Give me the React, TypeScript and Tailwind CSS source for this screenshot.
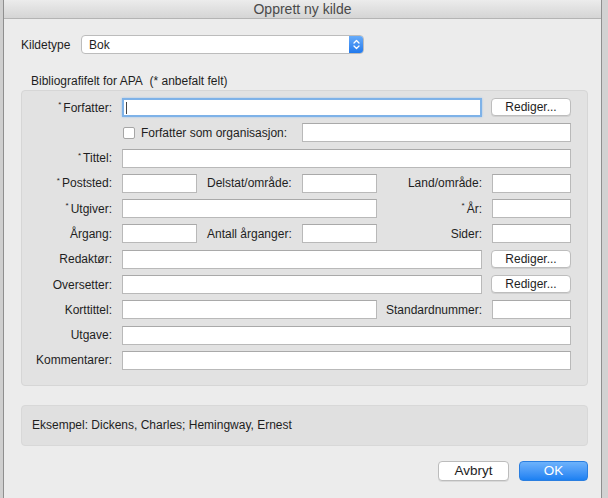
import React from "react";

const font = { fontFamily: '"Liberation Sans", Arial, sans-serif' };

function Input({ className = "" }: { className?: string }) {
  return (
    <div
      className={
        "h-[19px] bg-white border border-[#b9b9b9] border-t-[#a9a9a9] " + className
      }
    />
  );
}

function Label({ children, star, className = "" }: { children: React.ReactNode; star?: boolean; className?: string }) {
  return (
    <div className={"flex items-center justify-end h-[19px] text-[12px] text-[#1e1e1e] whitespace-nowrap " + className}>
      {star && <span className="text-[8px] mr-[2px] -mt-[5px]">*</span>}
      {children}
    </div>
  );
}

function EditBtn({ className = "" }: { className?: string }) {
  return (
    <div
      className={
        "h-[18px] -ml-[1px] bg-white rounded-[4px] border border-[#bdbdbd] shadow-[0_1px_0_rgba(0,0,0,0.08)] flex items-center justify-center text-[12px] text-[#1e1e1e] " +
        className
      }
    >
      Rediger...
    </div>
  );
}

export default function App() {
  return (
    <div className="w-[608px] h-[498px] bg-[#c9c9c9] flex overflow-hidden" style={font}>
      <div className="w-[3px] bg-[#cfcfcf]" />
      <div className="w-[599px] h-[498px] border-x border-[#8f8f8f] bg-[#ececec] flex flex-col">
        {/* title bar */}
        <div className="h-[19px] bg-gradient-to-b from-[#ececec] to-[#d5d5d5] border-b border-[#b4b4b4] flex items-center justify-center text-[14px] text-[#4a4a4a]">
          Opprett ny kilde
        </div>

        <div className="flex flex-col pl-[17px] pr-[13px]">
          {/* Kildetype */}
          <div className="flex items-center mt-[16px] h-[19px]">
            <div className="text-[12px] text-[#1e1e1e] w-[60px]">Kildetype</div>
            <div className="w-[283px] h-[19px] bg-white rounded-[4px] border border-[#bcbcbc] flex items-center overflow-hidden">
              <span className="flex-1 pl-[7px] text-[12px] text-[#1e1e1e]">Bok</span>
              <div className="w-[15px] h-[19px] -mr-[1px] bg-gradient-to-b from-[#6aaefa] to-[#1a76ec] rounded-r-[4px] flex items-center justify-center">
                <svg width="7" height="11" viewBox="0 0 7 11" fill="none" stroke="white" strokeWidth="1.3" strokeLinecap="round" strokeLinejoin="round">
                  <path d="M1 4 L3.5 1.5 L6 4" />
                  <path d="M1 7 L3.5 9.5 L6 7" />
                </svg>
              </div>
            </div>
          </div>

          {/* group label */}
          <div className="mt-[20px] ml-[10px] text-[12px] text-[#1e1e1e] h-[14px] leading-[14px]">
            Bibliografifelt for APA&nbsp; (* anbefalt felt)
          </div>

          {/* group box */}
          <div className="mt-[2px] bg-[#e2e2e2] rounded-[4px] border border-[#d6d6d6] pt-[7px] pb-[15px] pl-[7px] pr-[15px]">
            <div className="grid grid-cols-[83px_75px_85px_75px_95px_79px] gap-x-[10px] gap-y-[6.3px]">
              {/* Forfatter */}
              <Label star>Forfatter:</Label>
              <div className="col-span-4 h-[19px] bg-white border-2 border-[#7eb2e8] shadow-[0_0_2px_#9cc5f0] flex items-center pl-[2px]">
                <div className="w-[1px] h-[12px] bg-[#444]" />
              </div>
              <EditBtn />

              {/* checkbox row */}
              <div />
              <div className="col-span-2 flex items-center h-[19px]">
                <div className="w-[12px] h-[12px] ml-[1px] bg-white rounded-[2px] border border-[#a6a6a6]" />
                <span className="ml-[6px] text-[12px] text-[#1e1e1e] whitespace-nowrap">Forfatter som organisasjon:</span>
              </div>
              <Input className="col-span-3" />

              {/* Tittel */}
              <Label star>Tittel:</Label>
              <Input className="col-span-5" />

              {/* Poststed */}
              <Label star>Poststed:</Label>
              <Input />
              <Label className="!justify-start">Delstat/område:</Label>
              <Input />
              <Label>Land/område:</Label>
              <Input />

              {/* Utgiver */}
              <Label star>Utgiver:</Label>
              <Input className="col-span-3" />
              <Label star>År:</Label>
              <Input />

              {/* Årgang */}
              <Label>Årgang:</Label>
              <Input />
              <Label className="!justify-start">Antall årganger:</Label>
              <Input />
              <Label>Sider:</Label>
              <Input />

              {/* Redaktør */}
              <Label>Redaktør:</Label>
              <Input className="col-span-4" />
              <EditBtn />

              {/* Oversetter */}
              <Label>Oversetter:</Label>
              <Input className="col-span-4" />
              <EditBtn />

              {/* Korttittel */}
              <Label>Korttittel:</Label>
              <Input className="col-span-3" />
              <Label>Standardnummer:</Label>
              <Input />

              {/* Utgave */}
              <Label>Utgave:</Label>
              <Input className="col-span-5" />

              {/* Kommentarer */}
              <Label>Kommentarer:</Label>
              <Input className="col-span-5" />
            </div>
          </div>

          {/* example box */}
          <div className="mt-[19px] h-[41px] bg-[#e0e0e0] rounded-[4px] border border-[#d8d8d8] flex items-center pl-[10px] text-[12px] text-[#1e1e1e]">
            Eksempel: Dickens, Charles; Hemingway, Ernest
          </div>

          {/* buttons */}
          <div className="mt-[15px] flex justify-end gap-[10px]">
            <div className="w-[71px] h-[20px] bg-white rounded-[4px] border border-[#bcbcbc] shadow-[0_1px_0_rgba(0,0,0,0.08)] flex items-center justify-center text-[13.5px] text-[#1e1e1e]">
              Avbryt
            </div>
            <div className="w-[69px] h-[20px] rounded-[4px] bg-gradient-to-b from-[#6db2fb] to-[#1a80f2] border border-[#2a7ee0] flex items-center justify-center text-[13.5px] text-white">
              OK
            </div>
          </div>
        </div>
      </div>
      <div className="flex-1 bg-[#d2d2d2]" />
    </div>
  );
}
